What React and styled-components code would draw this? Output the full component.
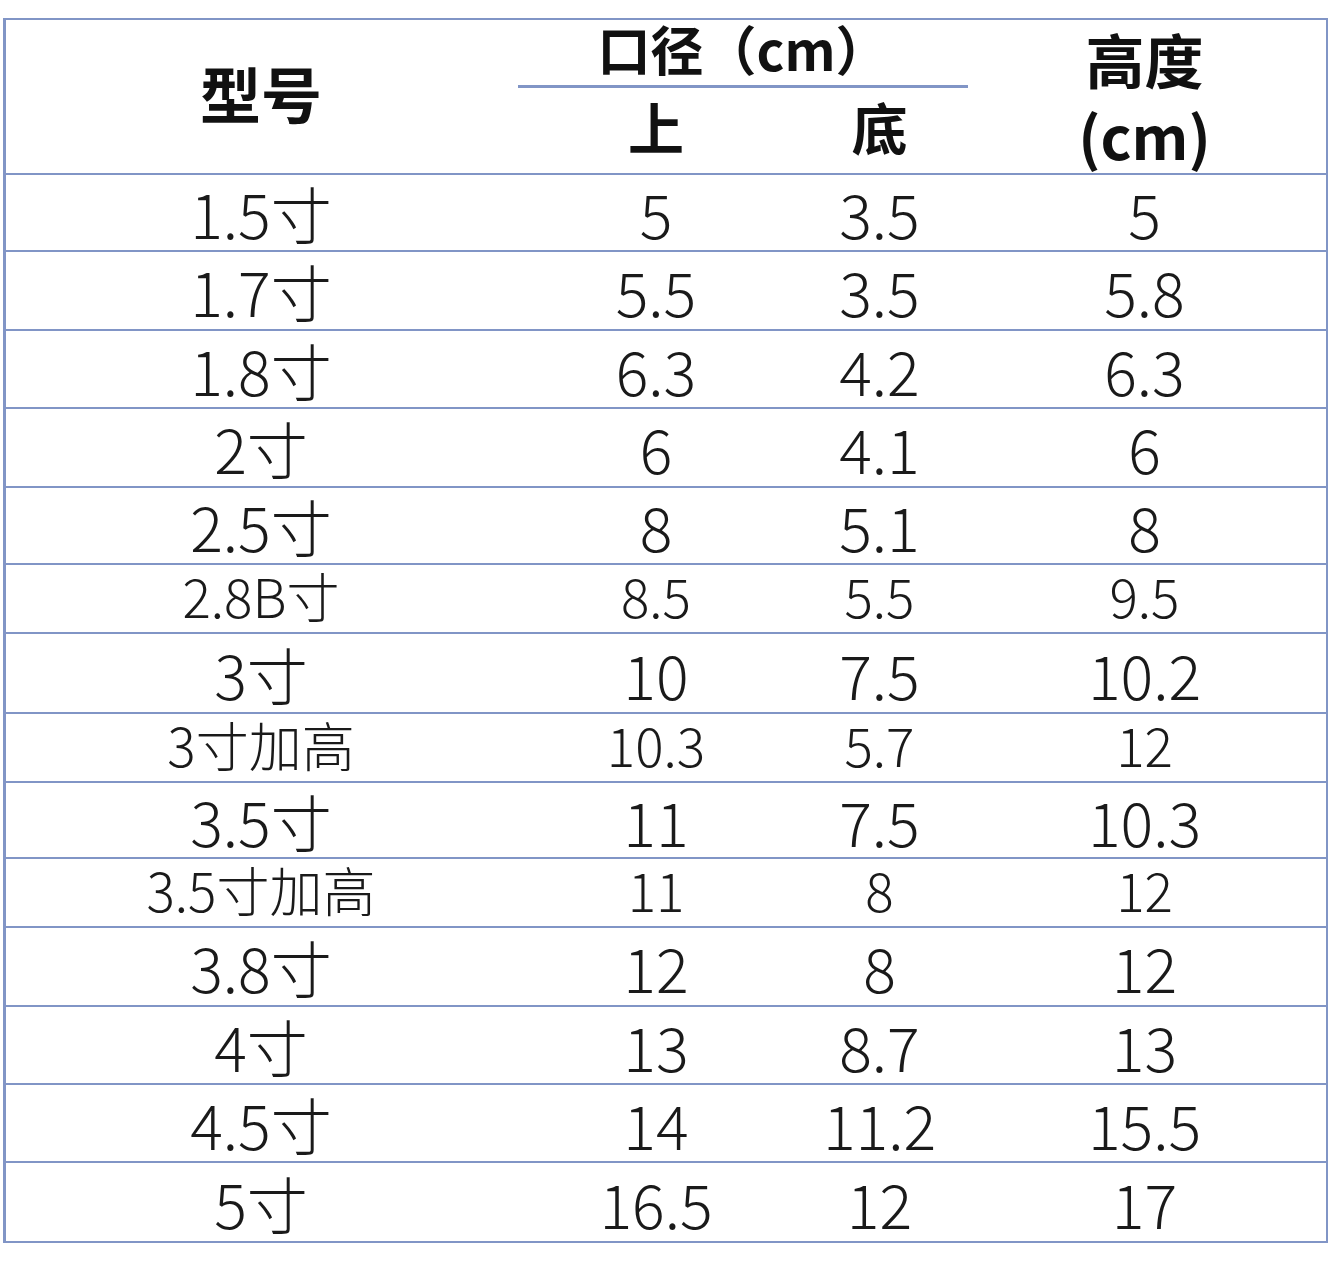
import React from "react";
import styled, { createGlobalStyle } from "styled-components";

const rows = [
  { model: "1.5寸", top: "5", bottom: "3.5", height: "5", h: 77 },
  { model: "1.7寸", top: "5.5", bottom: "3.5", height: "5.8", h: 79 },
  { model: "1.8寸", top: "6.3", bottom: "4.2", height: "6.3", h: 78 },
  { model: "2寸", top: "6", bottom: "4.1", height: "6", h: 79 },
  { model: "2.5寸", top: "8", bottom: "5.1", height: "8", h: 77 },
  { model: "2.8B寸", top: "8.5", bottom: "5.5", height: "9.5", h: 69, small: true },
  { model: "3寸", top: "10", bottom: "7.5", height: "10.2", h: 80 },
  { model: "3寸加高", top: "10.3", bottom: "5.7", height: "12", h: 69, small: true },
  { model: "3.5寸", top: "11", bottom: "7.5", height: "10.3", h: 76 },
  { model: "3.5寸加高", top: "11", bottom: "8", height: "12", h: 69, small: true },
  { model: "3.8寸", top: "12", bottom: "8", height: "12", h: 79 },
  { model: "4寸", top: "13", bottom: "8.7", height: "13", h: 78 },
  { model: "4.5寸", top: "14", bottom: "11.2", height: "15.5", h: 78 },
  { model: "5寸", top: "16.5", bottom: "12", height: "17", h: 78 },
];

export default function App() {
  return (
    <>
      <GlobalStyle />
      <Page>
        <Table>
          <HeaderRow>
            <HeadCell>型号</HeadCell>
            <GroupCell>
              <GroupTitle>口径（cm）</GroupTitle>
              <SubRow>
                <SubCell>上</SubCell>
                <SubCell>底</SubCell>
              </SubRow>
            </GroupCell>
            <HeightHead>
              <span>高度</span>
              <span>(cm)</span>
            </HeightHead>
          </HeaderRow>
          {rows.map((r) => (
            <Row key={r.model} $h={r.h} $small={r.small}>
              <Cell>{r.model}</Cell>
              <Cell>{r.top}</Cell>
              <Cell>{r.bottom}</Cell>
              <Cell>{r.height}</Cell>
            </Row>
          ))}
        </Table>
      </Page>
    </>
  );
}

const GlobalStyle = createGlobalStyle`
  body {
    margin: 0;
    background: #ffffff;
    font-family: "Noto Sans CJK SC", "Noto Sans", sans-serif;
    color: #1a1a1a;
  }
`;

const line = "#8195c6";

const Page = styled.div`
  width: 1331px;
  height: 1280px;
  padding: 18px 0 0 3px;
  box-sizing: border-box;
  background: #fff;
`;

const Table = styled.div`
  width: 1325px;
  border: 2px solid ${line};
  border-left-width: 3px;
  box-sizing: border-box;
`;

const cols = "510px 280px 167px 1fr";

const HeaderRow = styled.div`
  display: grid;
  grid-template-columns: ${cols};
  height: 155px;
  border-bottom: 2px solid ${line};
  box-sizing: border-box;
  font-weight: 700;
  color: #111;
`;

const HeadCell = styled.div`
  display: flex;
  align-items: center;
  justify-content: center;
  font-size: 61px;
  line-height: 1;
  padding-bottom: 8px;
`;

const GroupCell = styled.div`
  grid-column: 2 / span 2;
  display: flex;
  flex-direction: column;
`;

const GroupTitle = styled.div`
  height: 68px;
  margin: 0 -5px 0 2px;
  border-bottom: 3px solid ${line};
  display: flex;
  align-items: center;
  justify-content: center;
  font-size: 53px;
  line-height: 1;
  padding-bottom: 8px;
  box-sizing: border-box;
`;

const SubRow = styled.div`
  display: grid;
  grid-template-columns: 280px 167px;
  flex: 1;
`;

const SubCell = styled.div`
  display: flex;
  align-items: center;
  justify-content: center;
  font-size: 56px;
  line-height: 1;
  padding-bottom: 10px;
`;

const HeightHead = styled.div`
  display: flex;
  flex-direction: column;
  align-items: center;
  justify-content: center;
  font-size: 59px;
  line-height: 76px;
`;

const Row = styled.div`
  display: grid;
  grid-template-columns: ${cols};
  height: ${(p) => p.$h}px;
  border-bottom: 2px solid ${line};
  box-sizing: border-box;
  font-size: ${(p) => (p.$small ? "53px" : "61px")};
  font-weight: 300;
  padding-bottom: ${(p) => (p.$small ? "6px" : "0")};

  &:last-child {
    border-bottom: none;
  }
`;

const Cell = styled.div`
  display: flex;
  align-items: center;
  justify-content: center;
  line-height: 1;
  white-space: nowrap;
`;
